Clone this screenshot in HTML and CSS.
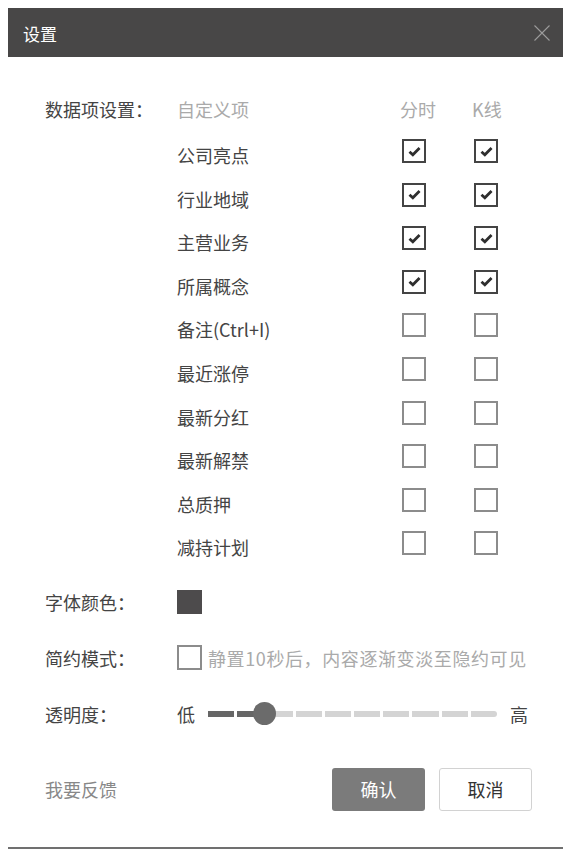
FILE: index.html
```html
<!DOCTYPE html>
<html lang="zh-CN">
<head>
    <meta charset="UTF-8">
    <title>设置</title>
    <link rel="stylesheet" href="styles.css">
</head>
<body>

    <div class="dialog">
        <div class="dialog-header">
            <span class="dialog-title">设置</span>
            <button class="close-btn" aria-label="关闭">
                <svg width="16" height="16" viewBox="0 0 16 16">
                    <path d="M0.5 0.5 L15.5 15.5 M15.5 0.5 L0.5 15.5" stroke="#9c9c9c" stroke-width="1.1" fill="none"/>
                </svg>
            </button>
        </div>

        <div class="dialog-body">
            <div class="data-table">
                <div class="table-row table-head">
                    <span class="field-label">数据项设置：</span>
                    <span class="col-head">自定义项</span>
                    <span class="col-head">分时</span>
                    <span class="col-head">K线</span>
                </div>
                <div id="item-rows">
                    <!-- rows are filled in by the script below -->
                </div>
            </div>

            <div class="options">
                <div class="option-row">
                    <span class="field-label">字体颜色：</span>
                    <span class="color-swatch"></span>
                </div>

                <div class="option-row">
                    <span class="field-label">简约模式：</span>
                    <label class="simple-mode">
                        <span class="check-box"></span>
                        <span class="hint">静置10秒后，内容逐渐变淡至隐约可见</span>
                    </label>
                </div>

                <div class="option-row">
                    <span class="field-label">透明度：</span>
                    <div class="slider">
                        <span class="slider-end">低</span>
                        <div class="slider-track" id="slider-track">
                            <span class="slider-knob"></span>
                        </div>
                        <span class="slider-end">高</span>
                    </div>
                </div>
            </div>
        </div>

        <div class="dialog-footer">
            <a href="#" class="feedback-link">我要反馈</a>
            <div class="footer-buttons">
                <button class="btn btn-primary">确认</button>
                <button class="btn btn-default">取消</button>
            </div>
        </div>
    </div>

    <script>
        const items = [
            { name: '公司亮点', fs: true, kline: true },
            { name: '行业地域', fs: true, kline: true },
            { name: '主营业务', fs: true, kline: true },
            { name: '所属概念', fs: true, kline: true },
            { name: '备注(Ctrl+I)', fs: false, kline: false },
            { name: '最近涨停', fs: false, kline: false },
            { name: '最新分红', fs: false, kline: false },
            { name: '最新解禁', fs: false, kline: false },
            { name: '总质押', fs: false, kline: false },
            { name: '减持计划', fs: false, kline: false }
        ];

        const checkMark = '<svg width="13" height="11" viewBox="0 0 14 12"><path d="M1.5 6.2 L5.2 9.6 L12.5 2.2" stroke="#2e2e2e" stroke-width="3" fill="none"/></svg>';

        const box = (checked) =>
            `<span class="check-box${checked ? ' checked' : ''}">${checked ? checkMark : ''}</span>`;

        const rowsEl = document.getElementById('item-rows');
        items.forEach(item => {
            const row = document.createElement('div');
            row.className = 'table-row';
            row.innerHTML = `
                <span></span>
                <span class="item-name">${item.name}</span>
                <span class="box-cell">${box(item.fs)}</span>
                <span class="box-cell">${box(item.kline)}</span>
            `;
            rowsEl.appendChild(row);
        });

        // slider: 10 segments, the first two are filled
        const track = document.getElementById('slider-track');
        for (let i = 0; i < 10; i++) {
            const seg = document.createElement('span');
            seg.className = 'slider-seg' + (i < 2 ? ' filled' : '');
            track.appendChild(seg);
        }
    </script>
</body>
</html>
```

FILE: styles.css
```css
* {
    box-sizing: border-box;
    margin: 0;
    padding: 0;
}

body {
    margin: 8px;
    background: #fff;
    font-family: "Noto Sans CJK SC", "Noto Sans", sans-serif;
    color: #444;
    font-size: 18px;
}

.dialog {
    width: 559px;
    height: 841px;
    border-right: 1px solid #555;
    border-bottom: 2px solid #707070;
    display: flex;
    flex-direction: column;
}

.dialog-header {
    height: 49px;
    background: #484747;
    display: flex;
    align-items: center;
    justify-content: space-between;
    padding: 0 16px 0 15px;
}

.dialog-title {
    color: #fff;
    font-size: 17px;
    line-height: 1;
    padding-top: 2px;
}

.close-btn {
    background: none;
    border: none;
    width: 16px;
    height: 16px;
    cursor: pointer;
    display: flex;
}

.dialog-body {
    padding: 32px 38px 0 37px;
}

.table-row {
    display: grid;
    grid-template-columns: 132px 223px 72px 1fr;
    align-items: center;
    height: 43.56px;
}

.table-head {
    height: 40.5px;
}

.field-label {
    color: #444;
    white-space: nowrap;
}

.col-head {
    color: #aaa;
}

.item-name {
    margin-top: 8px;
    color: #444;
}

.box-cell {
    display: flex;
    padding-left: 2px;
}

.check-box {
    width: 24px;
    height: 24px;
    border: 2px solid #8c8c8c;
    display: flex;
    align-items: center;
    justify-content: center;
    background: #fff;
}

.check-box.checked {
    border-color: #444;
}

.options {
    margin-top: 9px;
}

.option-row {
    display: grid;
    grid-template-columns: 132px 1fr;
    align-items: center;
    height: 56px;
}

.color-swatch {
    width: 25px;
    height: 24px;
    background: #4d4b4c;
}

.simple-mode {
    display: flex;
    align-items: center;
}

.simple-mode .check-box {
    width: 25px;
    height: 25px;
}

.hint {
    color: #aaa;
    margin-left: 6px;
    letter-spacing: 0.6px;
    white-space: nowrap;
}

.slider {
    display: flex;
    align-items: center;
}

.slider-end {
    color: #444;
}

.slider-track {
    flex: 1;
    margin: 0 13px;
    display: flex;
    gap: 3px;
    height: 6px;
    position: relative;
}

.slider-seg {
    flex: 1;
    background: #d4d4d4;
}

.slider-seg.filled {
    background: #666;
}

.slider-seg:first-child {
    border-radius: 3px 0 0 3px;
}

.slider-seg:last-child {
    border-radius: 0 3px 3px 0;
}

.slider-knob {
    position: absolute;
    left: 45px;
    top: -9px;
    width: 23px;
    height: 23px;
    border-radius: 50%;
    background: #6b6b6b;
}

.dialog-footer {
    display: flex;
    align-items: center;
    justify-content: space-between;
    padding: 0 34px 0 37px;
    margin-top: 26px;
}

.feedback-link {
    color: #888;
    text-decoration: none;
}

.footer-buttons {
    display: flex;
    gap: 14px;
}

.btn {
    font-family: inherit;
    font-size: 18px;
    width: 93px;
    height: 43px;
    border-radius: 3px;
    cursor: pointer;
}

.btn-primary {
    background: #7b7b7b;
    color: #fff;
    border: none;
}

.btn-default {
    background: #fff;
    color: #333;
    border: 1px solid #d2d2d2;
}
```
